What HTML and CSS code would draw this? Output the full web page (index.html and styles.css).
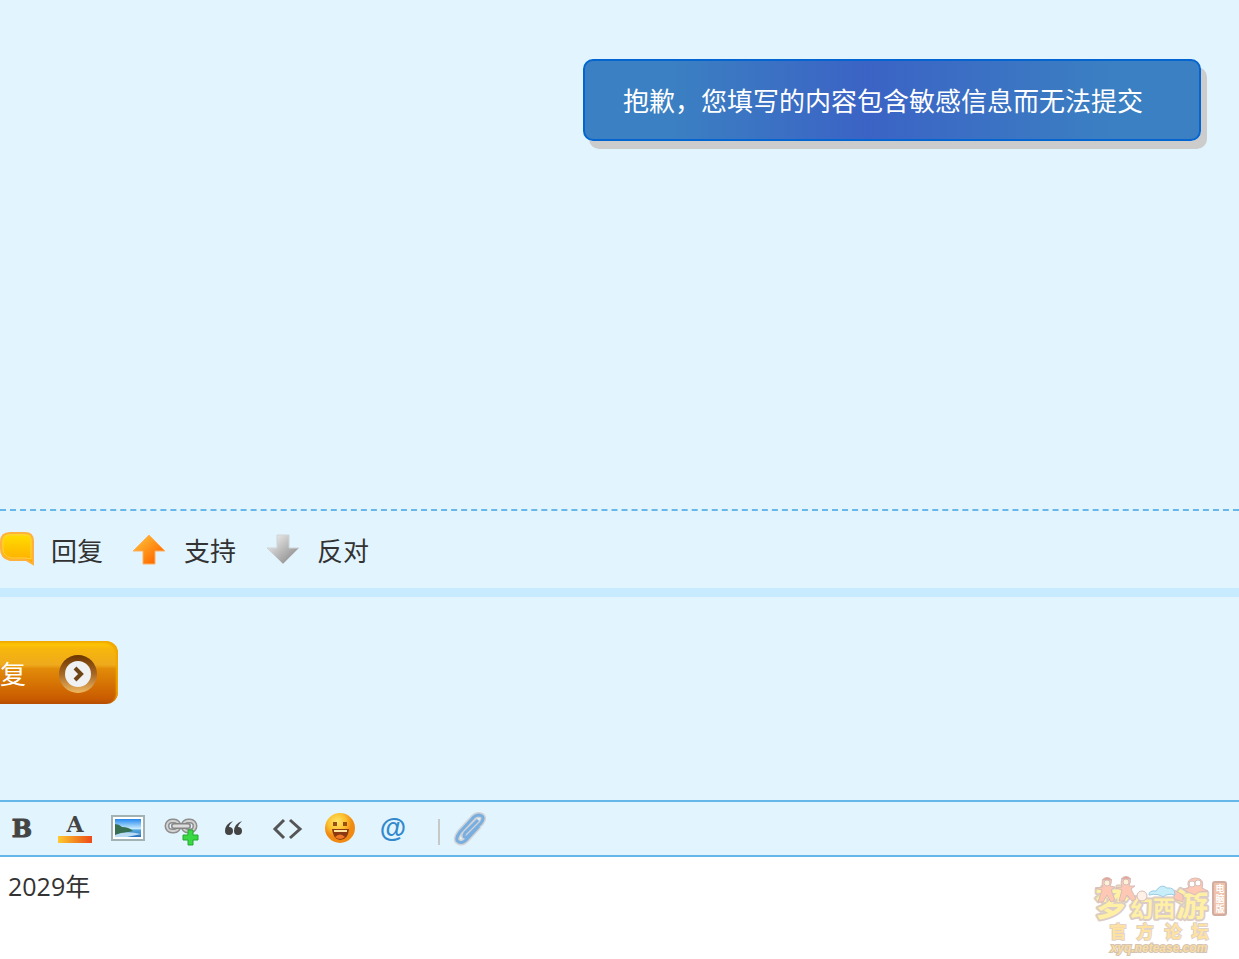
FILE: index.html
```html
<!DOCTYPE html>
<html lang="zh-CN">
<head>
<meta charset="utf-8">
<meta name="viewport" content="width=device-width, initial-scale=1">
<title>官方论坛</title>
<link rel="stylesheet" href="styles.css">
</head>
<body>
<main class="page">
  <section class="post">
    <div class="toast" role="alert">抱歉，您填写的内容包含敏感信息而无法提交</div>
  </section>

  <nav class="actions">
    <a class="action" href="#reply">
      <svg class="action-icon" viewBox="0 0 36 36" aria-hidden="true">
        <defs><linearGradient id="bubble" x1="0" y1="0" x2="0" y2="1"><stop offset="0" stop-color="#ffe000"/><stop offset="1" stop-color="#ffa800"/></linearGradient></defs>
        <path d="M10 1H25Q33 1 33 9V32L26 28H10Q1 26 1 17V10Q1 1 10 1Z" fill="url(#bubble)" stroke="#ffb13c" stroke-width="2"/>
        <path d="M10 3H25Q31 3 31 10V27L26 26H11Q3 24 3 17V10Q3 3 10 3Z" fill="none" stroke="#ffd04a" stroke-width="1"/>
      </svg>
      <span>回复</span>
    </a>
    <a class="action" href="#support">
      <svg class="action-icon" viewBox="0 0 36 36" aria-hidden="true">
        <defs><linearGradient id="up" x1="0" y1="0" x2="1" y2="1"><stop offset="0.2" stop-color="#ffb430"/><stop offset="0.8" stop-color="#ff6c00"/></linearGradient></defs>
        <path d="M16 3L32 19H22V32H10V19H0Z" fill="url(#up)" stroke="#ffb060" stroke-width="1"/>
      </svg>
      <span>支持</span>
    </a>
    <a class="action" href="#oppose">
      <svg class="action-icon" viewBox="0 0 36 36" aria-hidden="true">
        <defs><linearGradient id="down" x1="0" y1="0" x2="1" y2="1"><stop offset="0.2" stop-color="#e0e0e0"/><stop offset="0.8" stop-color="#959595"/></linearGradient></defs>
        <path d="M11 3H23V16H33L17 32L1 16H11Z" fill="url(#down)" stroke="#cfd3d5" stroke-width="1"/>
      </svg>
      <span>反对</span>
    </a>
  </nav>

  <section class="reply">
    <button class="reply-button" type="button">
      <span>复</span>
      <svg class="reply-arrow" viewBox="0 0 40 40" aria-hidden="true">
        <defs><linearGradient id="ring" x1="0" y1="0" x2="0" y2="1"><stop offset="0" stop-color="#6b3500"/><stop offset="0.5" stop-color="#a66724"/><stop offset="1" stop-color="#efb963"/></linearGradient></defs>
        <circle cx="20" cy="21" r="19" fill="url(#ring)"/>
        <circle cx="20" cy="21" r="13" fill="#f0f1f3"/>
        <path d="M17 15L23 21L17 27" fill="none" stroke="#704515" stroke-width="4"/>
      </svg>
    </button>
  </section>

  <section class="editor">
    <div class="toolbar">
      <button class="tool" type="button" aria-label="粗体"><svg viewBox="0 0 36 36" aria-hidden="true"><text class="serif" x="18" y="26" font-size="24" fill="#444" stroke="#444" stroke-width="1">B</text></svg></button>
      <button class="tool" type="button" aria-label="颜色"><svg viewBox="0 0 36 36" aria-hidden="true">
        <defs><linearGradient id="tint"><stop offset="0" stop-color="#ffca30"/><stop offset="0.5" stop-color="#f28a20"/><stop offset="1" stop-color="#ef4a18"/></linearGradient></defs>
        <text class="serif" x="18" y="21" font-size="22" fill="#444">A</text><path d="M1 25H35V32H1Z" fill="url(#tint)"/></svg></button>
      <button class="tool" type="button" aria-label="图片"><svg viewBox="0 0 36 36" aria-hidden="true">
        <defs><linearGradient id="sky" x1="0" y1="0" x2="0" y2="1"><stop offset="0" stop-color="#2589ef"/><stop offset="0.55" stop-color="#cceeff"/><stop offset="0.6" stop-color="#55a9df"/><stop offset="1" stop-color="#2a72be"/></linearGradient></defs>
        <path d="M2 5H34V29H2Z" fill="#fff" stroke="#a3b3b3" stroke-width="2"/>
        <path d="M5 8H31V26H5Z" fill="url(#sky)"/><path d="M5 13Q9 13 12 16Q19 16 23 20L14 22L5 24Z" fill="#376f53"/><path d="M5 24Q15 19 31 23L17 26H5Z" fill="#b9dcf3"/></svg></button>
      <button class="tool" type="button" aria-label="链接"><svg viewBox="0 0 36 36" aria-hidden="true">
        <g fill="none" stroke="#8e8e8e" stroke-width="5"><rect x="4" y="10" width="12" height="10" rx="5"/><rect x="20" y="10" width="12" height="10" rx="5"/></g>
        <g fill="none" stroke="#d2d2d2" stroke-width="2"><rect x="4" y="10" width="12" height="10" rx="5"/><rect x="20" y="10" width="12" height="10" rx="5"/></g>
        <path d="M11 15H25" stroke="#858585" stroke-width="6" stroke-linecap="round"/><path d="M11 15H25" stroke="#ddd" stroke-width="3" stroke-linecap="round"/>
        <path d="M25 19H30V24H35V29H30V34H25V29H20V24H25Z" fill="#38d943" stroke="#25a82f" stroke-width="1"/></svg></button>
      <button class="tool" type="button" aria-label="引用"><svg viewBox="0 0 36 36" aria-hidden="true"><path d="M17 10Q9 13 9 20A4 4 0 1 0 13 16Q13 14 17 10ZM26 10Q18 13 18 20A4 4 0 1 0 22 16Q22 14 26 10Z" fill="#444"/></svg></button>
      <button class="tool" type="button" aria-label="代码"><svg viewBox="0 0 36 36" aria-hidden="true"><path d="M15 9L6 18L15 27M21 9L31 18L21 27" fill="none" stroke="#555" stroke-width="3"/></svg></button>
      <button class="tool" type="button" aria-label="表情"><svg viewBox="0 0 36 36" aria-hidden="true">
        <defs><radialGradient id="face" cx="0.4" cy="0.3"><stop offset="0" stop-color="#ffe66a"/><stop offset="0.6" stop-color="#fbc02e"/><stop offset="1" stop-color="#f18a12"/></radialGradient></defs>
        <circle cx="18" cy="17" r="15" fill="url(#face)"/><path d="M13 11V15M23 11V15" stroke="#965015" stroke-width="4"/><path d="M10 18H27Q26 29 18 29Q11 28 10 18Z" fill="#8c3812"/><path d="M12 19H25V21H12Z" fill="#ffe5a0"/><path d="M13 26Q18 21 23 26Q18 30 13 26Z" fill="#f07824"/></svg></button>
      <button class="tool" type="button" aria-label="提到"><svg viewBox="0 0 36 36" aria-hidden="true"><text class="at" x="18" y="26" font-size="27">@</text></svg></button>
      <span class="divider"></span>
      <button class="tool" type="button" aria-label="附件"><svg viewBox="0 0 36 36" aria-hidden="true">
        <path d="M25 9L12 22Q9 27 14 26L28 12Q33 5 26 4Q22 4 19 8L7 21Q1 29 6 31Q10 33 15 27L26 15" fill="none" stroke="#d3d3d5" stroke-width="6"/>
        <path d="M25 9L12 22Q9 27 14 26L28 12Q33 5 26 4Q22 4 19 8L7 21Q1 29 6 31Q10 33 15 27L26 15" fill="none" stroke="#78afe0" stroke-width="3"/></svg></button>
    </div>
    <textarea class="message" aria-label="回复内容">2029年</textarea>
    <svg class="watermark" viewBox="0 0 140 84" role="img" aria-label="梦幻西游电脑版官方论坛">
      <g class="brand">
        <text x="6" y="41" font-size="34">梦</text>
        <text x="41" y="42" font-size="23">幻</text>
        <text x="64" y="41" font-size="22">西</text>
        <text x="87" y="41" font-size="32">游</text>
      </g>
      <g fill="#ffc8b4" stroke="#d6bdb8">
        <path d="M6 13L13 15L9 27L14 27L18 20L22 27L26 25L22 15L26 12L21 11Q25 3 18 3Q11 3 14 12Z"/>
        <path d="M27 13L33 15L30 26L35 26L38 20L43 26L47 24L42 14L46 11L40 11Q44 2 37 2Q30 3 33 12Z"/>
        <path d="M13 5Q18 0 23 5ZM32 4Q37 -1 42 4Z" fill="#ed9b89"/>
        <circle cx="18" cy="8" r="3" fill="#fff0d8"/><circle cx="37" cy="7" r="3" fill="#fff0d8"/>
        <circle cx="53" cy="21" r="5" fill="#fff1e7"/><path d="M85 15L94 20V27L85 24Z"/><path d="M94 14L100 13Q96 4 106 3Q116 3 113 13L119 16L110 17L106 20L99 17Z"/>
        <circle cx="103" cy="9" r="3" fill="#fff"/><circle cx="109" cy="8" r="3" fill="#fff"/>
      </g>
      <path d="M60 20Q60 15 67 16Q72 8 78 13Q86 12 86 20Q78 18 74 22Q69 18 60 20Z" fill="#c8eefa" stroke="#9dcce3"/>
      <rect x="124" y="7" width="13" height="33" rx="2" fill="#efc2aa" stroke="#d2aca0" stroke-width="2"/>
      <g class="badge"><text x="131" y="17">电</text><text x="131" y="27">脑</text><text x="131" y="37">版</text></g>
      <g class="forum"><text x="29" y="63">官</text><text x="56" y="63">方</text><text x="84" y="63">论</text><text x="111" y="63">坛</text></g>
      <text class="site" x="70" y="77">xyq.netease.com</text>
    </svg>
  </section>
</main>
</body>
</html>
```
FILE: styles.css
```css
* { box-sizing: border-box; }

body {
  margin: 0;
  background: #e2f5ff;
  color: #333;
  font-family: "Noto Sans CJK SC", sans-serif;
  font-size: 26px;
  line-height: 36px;
}

.page {
  display: flex;
  flex-direction: column;
  min-height: 100vh;
  overflow: hidden;
}

.post {
  position: relative;
  min-height: 511px;
  border-bottom: 2px dashed #68b7ea;
}

.toast {
  position: absolute;
  top: 59px;
  right: 38px;
  padding: 22px 56px 22px 38px;
  border: 2px solid #0565d0;
  border-radius: 10px;
  background: linear-gradient(90deg, #3b80c2 14%, #3b63c5 46%, #3b80c2 86%);
  box-shadow: 6px 8px 0 #ccc;
  color: #fff;
  line-height: 34px;
}

.actions {
  display: flex;
  gap: 30px;
  padding: 20px 0;
  border-bottom: 9px solid #c9ebff;
}

.action {
  display: flex;
  align-items: center;
  gap: 15px;
  height: 37px;
  color: #333;
  text-decoration: none;
}

.action-icon {
  width: 36px;
  height: 36px;
}

.reply { padding: 44px 0 96px; }

.reply-button {
  display: flex;
  align-items: center;
  gap: 32px;
  height: 63px;
  padding: 0 20px 0 0;
  border: 0;
  border-radius: 0 12px 12px 0;
  background: linear-gradient(#ffce00, #f8b70c 12%, #eeaa1c 38%, #e28b08 44%, #c95b00 92%, #b64e00);
  box-shadow: inset -2px 2px 2px #f0a800;
  color: #fff;
  font: 26px/36px "Noto Sans CJK SC", sans-serif;
}

.reply-arrow {
  width: 40px;
  height: 40px;
}

.editor {
  position: relative;
  display: flex;
  flex: 1;
  flex-direction: column;
  border-top: 2px solid #64b7e8;
}

.toolbar {
  display: flex;
  align-items: center;
  gap: 17px;
  height: 55px;
  padding: 0 4px;
  border-bottom: 2px solid #64b7e8;
}

.tool {
  width: 36px;
  height: 36px;
  padding: 0;
  border: 0;
  background: none;
}

.tool svg {
  display: block;
  width: 36px;
  height: 36px;
  overflow: visible;
}

.serif {
  font-family: "DejaVu Serif", serif;
  font-weight: bold;
  text-anchor: middle;
}

.at {
  fill: #3389cb;
  font-family: "Liberation Sans", sans-serif;
  font-weight: bold;
  text-anchor: middle;
}

.divider {
  width: 2px;
  height: 26px;
  margin: 6px -4px 0 10px;
  background: #c8c8c8;
}

.message {
  flex: 1;
  width: 100%;
  min-height: 102px;
  padding: 12px 8px;
  border: 0;
  outline: 0;
  background: #fff;
  color: #333;
  font: 25px/34px "Open Sans", "Noto Sans CJK SC", sans-serif;
  resize: none;
}

.watermark {
  position: absolute;
  right: 10px;
  bottom: 0;
  width: 140px;
  height: 84px;
  overflow: visible;
  font-family: "Noto Sans CJK SC", sans-serif;
  font-weight: bold;
  pointer-events: none;
}

.brand {
  fill: #fff0a6;
  stroke: #dccdc4;
  stroke-width: 4px;
  stroke-linejoin: round;
  paint-order: stroke;
}

.badge {
  fill: #fff;
  font-size: 9px;
  text-anchor: middle;
}

.forum {
  fill: #ffe2a0;
  stroke: #dfd3ca;
  stroke-width: 2px;
  paint-order: stroke;
  font-size: 17px;
  text-anchor: middle;
}

.site {
  fill: #f8dda4;
  stroke: #d4c3b2;
  stroke-width: 2px;
  paint-order: stroke;
  font-family: "Liberation Sans", sans-serif;
  font-size: 12px;
  font-style: italic;
  text-anchor: middle;
}
```
